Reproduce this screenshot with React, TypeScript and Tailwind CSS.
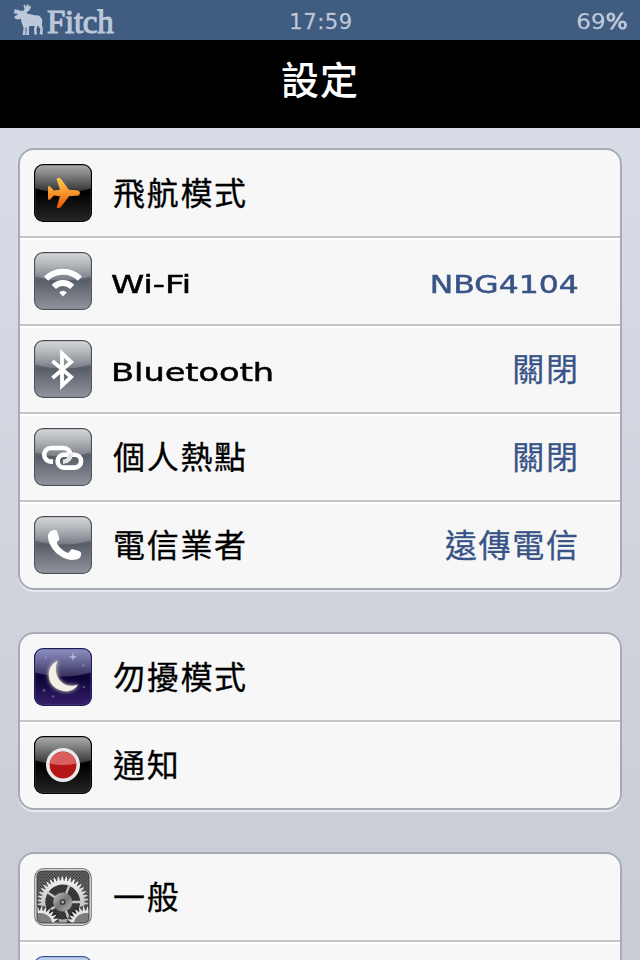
import { useId, type ReactNode } from "react";
import clsx from "clsx";

type IconName =
  | "airplane"
  | "wifi"
  | "bluetooth"
  | "hotspot"
  | "carrier"
  | "moon"
  | "record"
  | "gears"
  | "blank";

interface SettingRow {
  icon: IconName;
  label: string;
  latin?: boolean;
  value?: string;
  valueLatin?: boolean;
}

const groups: SettingRow[][] = [
  [
    { icon: "airplane", label: "飛航模式" },
    {
      icon: "wifi",
      label: "Wi-Fi",
      latin: true,
      value: "NBG4104",
      valueLatin: true,
    },
    { icon: "bluetooth", label: "Bluetooth", latin: true, value: "關閉" },
    { icon: "hotspot", label: "個人熱點", value: "關閉" },
    { icon: "carrier", label: "電信業者", value: "遠傳電信" },
  ],
  [
    { icon: "moon", label: "勿擾模式" },
    { icon: "record", label: "通知" },
  ],
  [
    { icon: "gears", label: "一般" },
    { icon: "blank", label: "" },
  ],
];

const tones = {
  black: { top: "#2a2a2a", mid: "#000000", bottom: "#262626", edge: "#000000" },
  grey: { top: "#94989f", mid: "#585e68", bottom: "#92969d", edge: "#4b505a" },
  night: { top: "#3c4496", mid: "#0d0338", bottom: "#35206a", edge: "#1d1a5c" },
  blue: { top: "#8fa9dc", mid: "#3d63b5", bottom: "#6d8fd6", edge: "#34549c" },
};

const glossOpacity = { black: 0.62, grey: 0.62, night: 0.42, blue: 0.5 };

function Tile({
  tone,
  children,
}: {
  tone: keyof typeof tones;
  children?: ReactNode;
}) {
  const id = useId();
  const color = tones[tone];

  return (
    <svg viewBox="0 0 58 58" className="size-[58px] shrink-0">
      <defs>
        <linearGradient id={`${id}base`} x1="0" y1="0" x2="0" y2="1">
          <stop offset="0" stopColor={color.top} />
          <stop offset="0.5" stopColor={color.mid} />
          <stop offset="1" stopColor={color.bottom} />
        </linearGradient>
        <linearGradient id={`${id}gloss`} x1="0" y1="0" x2="0" y2="1">
          <stop offset="0" stopColor="#fff" stopOpacity={glossOpacity[tone]} />
          <stop offset="1" stopColor="#fff" stopOpacity="0.17" />
        </linearGradient>
        <clipPath id={`${id}clip`}>
          <rect x="0.5" y="0.5" width="57" height="57" rx="8.5" />
        </clipPath>
      </defs>
      <g clipPath={`url(#${id}clip)`}>
        <rect width="58" height="58" fill={`url(#${id}base)`} />
        <path d="M0 0H58V24Q29 33 0 24Z" fill={`url(#${id}gloss)`} />
        {children}
      </g>
      <rect
        x="1.5"
        y="1.5"
        width="55"
        height="55"
        rx="7.5"
        fill="none"
        stroke="#fff"
        strokeOpacity="0.12"
      />
      <rect
        x="0.6"
        y="0.6"
        width="56.8"
        height="56.8"
        rx="8.5"
        fill="none"
        stroke={color.edge}
        strokeWidth="1.2"
      />
    </svg>
  );
}

function AirplaneIcon() {
  return (
    <Tile tone="black">
      <defs>
        <linearGradient id="plane" x1="0" y1="0" x2="0" y2="1">
          <stop offset="0" stopColor="#ffcb4f" />
          <stop offset="0.5" stopColor="#f79429" />
          <stop offset="1" stopColor="#e3520a" />
        </linearGradient>
      </defs>
      <path
        d="M46 29C46 31 44 31.8 42 31.8L35 32.2L27 43C26.3 44.3 23 44.4 22.6 43.4L26 32.2L19.8 31.6L16.2 35.4L14 35.8V22.2L16.2 22.6L19.8 26.4L26 25.8L22.6 14.8C23 13.7 26.2 13.8 27 15L35 25.8L42 26.2C44.5 26.3 46 27.2 46 29Z"
        fill="url(#plane)"
      />
    </Tile>
  );
}

function WifiIcon() {
  return (
    <Tile tone="grey">
      <g fill="none" stroke="#fff" strokeWidth="6">
        <path d="M12.1 26.6A24.3 24.3 0 0 1 45.9 26.6" />
        <path d="M19.8 34.8A13 13 0 0 1 38.2 34.8" />
      </g>
      <path d="M25.2 40.4A5.4 5.4 0 0 1 32.8 40.4L29 44.4Z" fill="#fff" />
    </Tile>
  );
}

function BluetoothIcon() {
  return (
    <Tile tone="grey">
      <path
        d="M18.5 21L37.2 37L28 45.6V13.4L37.2 22L18.5 38"
        fill="none"
        stroke="#fff"
        strokeWidth="3.8"
      />
    </Tile>
  );
}

function HotspotIcon() {
  return (
    <Tile tone="grey">
      <g fill="none" strokeWidth="4.6">
        <path
          d="M19 33.6H17A6.8 6.8 0 0 1 17 20H29.5A6.8 6.8 0 0 1 36.3 26.8"
          stroke="#fff"
        />
        <path
          d="M29.5 26.8H40.7A6.4 6.4 0 0 1 40.7 39.6H29A6.5 6.5 0 0 1 29 26.8H31"
          stroke="#fff"
        />
        <path d="M36.3 25.6C36.6 30.6 33.4 33.6 29 33.6" stroke="#e4e5e7" />
        <path
          d="M32.2 29.6C31.6 30.8 30.6 31.3 29 31.3M38.8 29.4C38.4 33.2 35.2 36 31 36"
          stroke="#6b7079"
          strokeWidth="1"
          strokeOpacity="0.7"
        />
      </g>
    </Tile>
  );
}

function CarrierIcon() {
  return (
    <Tile tone="grey">
      <path
        d="M16 15.8C19 13.5 22.6 13.2 23.4 16L25.3 22.4C25.7 24.5 22.6 25.3 22.8 27C25 31.4 29.5 35.3 33.8 36.8C35.8 36.6 36.2 32.8 38.6 33.2L45 35C47.8 36.2 47.4 38 46.6 40.6C45.2 43.4 42 44 38 44C26 43 15 32 14 21.4C13.8 19 14.4 17.2 16 15.8Z"
        fill="#fff"
      />
    </Tile>
  );
}

const stars = [
  { x: 12, y: 9.5, r: 1.3 },
  { x: 49.5, y: 17.5, r: 1.2 },
  { x: 49.8, y: 39, r: 1.2 },
  { x: 10, y: 42.5, r: 1.4 },
  { x: 19, y: 48.5, r: 1.3 },
];

function MoonIcon() {
  return (
    <Tile tone="night">
      <g fill="#b3b2e6" fillOpacity="0.4">
        {stars.map((star) => (
          <circle key={star.x} cx={star.x} cy={star.y} r={star.r} />
        ))}
      </g>
      <path
        d="M39 4L39.8 8L43.5 9L39.8 9.8L39 13.5L38.2 9.8L34.5 9L38.2 8Z"
        fill="#d5d8f5"
        fillOpacity="0.75"
      />
      <path
        d="M24.2 12.5C13.5 17 12.2 31 19 37.8C27 46 40 44.5 44.2 36.2C36 39.6 28.5 37 24.4 30.4C20.8 24.4 21 17.5 24.2 12.5Z"
        fill="#f3f1e6"
        className="drop-shadow-[0_0_2px_#f5f0d0]"
      />
    </Tile>
  );
}

function RecordIcon() {
  return (
    <Tile tone="black">
      <circle cx="29" cy="29" r="17" fill="#e9e9e9" />
      <circle cx="29" cy="29" r="13.4" fill="#b61515" />
      <path
        d="M15.7 27.4A13.4 13.4 0 0 1 42.3 27.4Q29 30.4 15.7 27.4Z"
        fill="#d95f5f"
      />
    </Tile>
  );
}

const spokes = [-68, 0, 70, 148, 212];

// Closed outline that alternates between the tooth tips and the roots
function gearOutline(cx: number, cy: number, tip: number, root: number, teeth: number) {
  const points: string[] = [];
  for (let i = 0; i < teeth; i++) {
    [
      [root, 0],
      [tip, 0.3],
      [tip, 0.5],
      [root, 0.8],
    ].forEach(([radius, offset]) => {
      const angle = ((i + offset) / teeth) * Math.PI * 2;
      const x = cx + radius * Math.cos(angle);
      const y = cy + radius * Math.sin(angle);
      points.push(`${x.toFixed(2)} ${y.toFixed(2)}`);
    });
  }
  return `M${points.join("L")}Z`;
}

function ring(cx: number, cy: number, r: number) {
  return `M${cx - r} ${cy}a${r} ${r} 0 1 0 ${r * 2} 0a${r} ${r} 0 1 0 ${-r * 2} 0Z`;
}

function GearsIcon() {
  return (
    <svg viewBox="0 0 58 58" className="size-[58px] shrink-0">
      <defs>
        <pattern id="mesh" width="3" height="3" patternUnits="userSpaceOnUse">
          <rect width="3" height="3" fill="#6b6b6b" />
          <rect width="1.3" height="1.3" fill="#303030" />
          <rect x="1.5" y="1.5" width="1.3" height="1.3" fill="#303030" />
        </pattern>
        <linearGradient id="steel" x1="0" y1="0" x2="0" y2="1">
          <stop offset="0" stopColor="#f8f8f8" />
          <stop offset="1" stopColor="#9c9c9c" />
        </linearGradient>
        <linearGradient id="hub" x1="0" y1="0" x2="1" y2="1">
          <stop offset="0" stopColor="#c6c6c6" />
          <stop offset="0.5" stopColor="#767676" />
          <stop offset="1" stopColor="#b5b5b5" />
        </linearGradient>
        <clipPath id="gearWindow">
          <rect x="3" y="3" width="52" height="52" rx="5" />
        </clipPath>
      </defs>
      <rect
        x="0.7"
        y="0.7"
        width="56.6"
        height="56.6"
        rx="9"
        fill="#ececec"
        stroke="#828282"
        strokeWidth="1.2"
      />
      <g clipPath="url(#gearWindow)">
        <rect width="58" height="58" fill="url(#mesh)" />
        <circle cx="28.7" cy="34" r="18" fill="#000" fillOpacity="0.35" />
        <path
          d={gearOutline(28.7, 34, 25.6, 21.4, 38) + ring(28.7, 34, 17.4)}
          fill="url(#steel)"
          fillRule="evenodd"
        />
        {spokes.map((angle) => (
          <path
            key={angle}
            d="M34 34H47"
            stroke="#c4c4c4"
            strokeWidth="2.4"
            transform={`rotate(${angle} 28.7 34)`}
          />
        ))}
        <circle cx="28.7" cy="34" r="9.6" fill="url(#hub)" />
        <circle
          cx="28.7"
          cy="34"
          r="2.2"
          fill="#aaa"
          stroke="#333"
          strokeWidth="1.3"
        />
        {[6, 52].map((cx) => (
          <g key={cx}>
            <circle cx={cx} cy="57.5" r="19.5" fill="#222" fillOpacity="0.75" />
            <path d={gearOutline(cx, 57.5, 19, 15, 28)} fill="#e6e6e6" />
            <circle cx={cx} cy="57.5" r="12.6" fill="#7d7d7d" />
          </g>
        ))}
      </g>
      <rect
        x="3"
        y="3"
        width="52"
        height="52"
        rx="5"
        fill="none"
        stroke="#3c3c3c"
        strokeWidth="1"
      />
    </svg>
  );
}

const icons: Record<IconName, () => ReactNode> = {
  airplane: AirplaneIcon,
  wifi: WifiIcon,
  bluetooth: BluetoothIcon,
  hotspot: HotspotIcon,
  carrier: CarrierIcon,
  moon: MoonIcon,
  record: RecordIcon,
  gears: GearsIcon,
  blank: () => <Tile tone="blue" />,
};

function MooseLogo() {
  return (
    <svg viewBox="0 0 30 32" className="h-8 w-[30px] shrink-0" fill="#bcc8da">
      <path d="M0 9.6L0.2 6.4L1.4 5L2.4 6L4.2 5.6L5.4 6.8L9.8 6.8L10.6 5L9.4 1.6L10.6 0.4L12.2 2.8L13.2 0L14.4 0.2L14.4 2.6L16.2 1.4L17 3L15.4 6.2L12.4 8.4L14.2 10.2C16.6 9.4 18.6 11.4 21.4 11.2C25.4 11 27.8 13 28.4 17L27.8 20.8L28.8 24.4L28.6 30.6H25.6L26.4 25L23.8 21.6L22.4 25.6L23 30.6H20.4L20 25.4L20.6 22L15.4 22L14.8 25.6L15.2 31H12.2L12.6 24L11.8 22.8L11.4 26L11.6 31H8.6L9.6 24L7.6 18.6L6.8 14.8L4 15.6L1 14.8L0.4 12.6L4 10.4L2.6 9.4Z" />
    </svg>
  );
}

function StatusBar() {
  return (
    <header className="grid h-10 grid-cols-3 items-center overflow-hidden bg-[#405c80] pr-3 pl-3.5 text-[#bcc8da]">
      <div className="flex h-10 items-center gap-[3px]">
        <MooseLogo />
        <span className="pt-1 font-['Liberation_Serif',serif] text-[33px] leading-none tracking-[-0.3px] [-webkit-text-stroke:1.1px_#bcc8da]">
          Fitch
        </span>
      </div>
      <span className="pt-1 text-center font-['DejaVu_Sans',sans-serif] text-[21px] leading-none tracking-[0.6px] [-webkit-text-stroke:0.3px_#bcc8da] text-shadow-[0_-1px_0_#2c4260]">
        17:59
      </span>
      <span className="origin-right scale-x-[1.1] pt-1 text-right font-['DejaVu_Sans',sans-serif] text-[21px] leading-none [-webkit-text-stroke:0.3px_#bcc8da] text-shadow-[0_-1px_0_#2c4260]">
        69<span className="[-webkit-text-stroke:0.9px_#bcc8da]">%</span>
      </span>
    </header>
  );
}

function Row({ row, last }: { row: SettingRow; last: boolean }) {
  const Icon = icons[row.icon];

  return (
    <li
      className={clsx(
        "flex items-center pr-[41px] pl-3.5",
        last
          ? "h-[86px] shadow-[inset_0_2px_0_#ffffff]"
          : "h-[88px] border-b-2 border-[#c6c6c8] not-first:shadow-[inset_0_2px_0_#ffffff]"
      )}
    >
      <Icon />
      <span
        className={clsx(
          "origin-left whitespace-nowrap text-black",
          row.latin
            ? "ml-[19px] scale-x-[1.4] pt-2 font-['DejaVu_Sans',sans-serif] text-2xl [-webkit-text-stroke:0.5px_#000]"
            : "ml-[21px] pb-[5px] font-['Noto_Sans_CJK_TC',sans-serif] text-[32px] leading-10 tracking-[1.7px] [-webkit-text-stroke:0.3px_#000]"
        )}
      >
        {row.label}
      </span>
      {row.value && (
        <span
          className={clsx(
            "ml-auto origin-right whitespace-nowrap text-[#385487]",
            row.valueLatin
              ? "scale-x-[1.31] pt-2 font-['DejaVu_Sans',sans-serif] text-2xl [-webkit-text-stroke:0.5px_#385487]"
              : "-mr-[0.7px] pb-[5px] font-['Noto_Sans_CJK_TC',sans-serif] text-[32px] leading-10 tracking-[1.7px] [-webkit-text-stroke:0.3px_#385487]"
          )}
        >
          {row.value}
        </span>
      )}
    </li>
  );
}

export default function App() {
  return (
    <div className="flex h-[960px] w-[640px] flex-col overflow-hidden bg-black">
      <StatusBar />
      <div className="flex h-[88px] shrink-0 items-center justify-center bg-black pb-3">
        <h1 className="font-['Noto_Sans_CJK_TC',sans-serif] text-[38px] leading-none font-medium tracking-[1px] text-white">
          設定
        </h1>
      </div>
      <main className="flex min-h-0 flex-1 flex-col gap-[42px] overflow-hidden bg-linear-to-b from-[#d8dce6] to-[#c8ccd5] px-[18px] pt-5">
        {groups.map((rows) => (
          <ul
            key={rows[0].label}
            className="shrink-0 overflow-hidden rounded-[16px] border-2 border-[#a7abb4] bg-[#f7f7f7] shadow-[0_2px_0_#e6e9ee]"
          >
            {rows.map((row, index) => (
              <Row
                key={row.icon}
                row={row}
                last={index === rows.length - 1}
              />
            ))}
          </ul>
        ))}
      </main>
    </div>
  );
}
